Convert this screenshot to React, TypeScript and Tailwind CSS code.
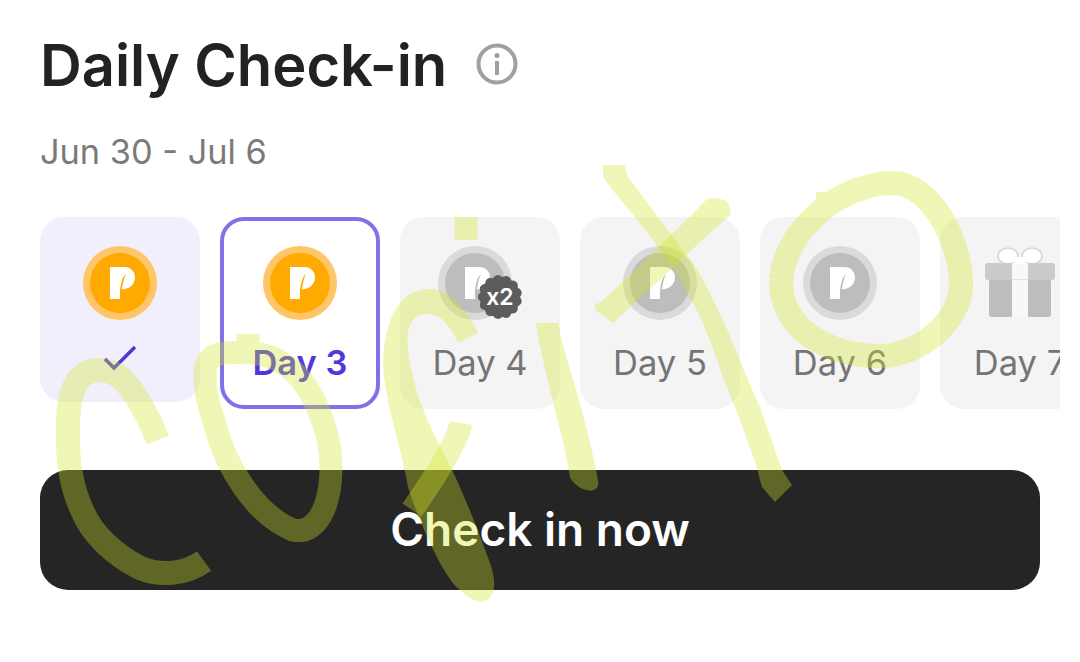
const FONT = "font-['Inter','Liberation_Sans',sans-serif]";

function Coin({ muted = false, className = "" }: { muted?: boolean; className?: string }) {
	return (
		<svg width="74" height="74" viewBox="0 0 74 74" className={`block shrink-0 ${className}`}>
			<circle cx="37" cy="37" r="37" fill={muted ? "#dadada" : "#ffc566"} />
			<circle cx="37" cy="37" r="30" fill={muted ? "#bdbdbd" : "#ffaa00"} />
			<path
				d="M27 21H41C48 21 52 26 52 31C52 38 47 43 39 43.5C39.5 38 41 32 43 28C39 31 36.5 40 37 53H27Z"
				fill="#fff"
			/>
		</svg>
	);
}

function scallopPath(cx: number, cy: number, r: number, bumps: number) {
	let d = "";
	for (let i = 0; i < bumps; i++) {
		const a0 = (i / bumps) * Math.PI * 2;
		const a1 = ((i + 0.5) / bumps) * Math.PI * 2;
		const a2 = ((i + 1) / bumps) * Math.PI * 2;
		if (i === 0) d += `M${cx + (r - 2) * Math.cos(a0)} ${cy + (r - 2) * Math.sin(a0)}`;
		d += `Q${cx + (r + 3) * Math.cos(a1)} ${cy + (r + 3) * Math.sin(a1)} ${cx + (r - 2) * Math.cos(a2)} ${cy + (r - 2) * Math.sin(a2)}`;
	}
	return `${d}Z`;
}

function Gift() {
	return (
		<svg width="74" height="74" viewBox="0 0 74 74" className="block shrink-0">
			<ellipse cx="25" cy="10" rx="10" ry="8" fill="#fff" stroke="#d4d4d4" strokeWidth="1.5" />
			<ellipse cx="49" cy="10" rx="10" ry="8" fill="#fff" stroke="#d4d4d4" strokeWidth="1.5" />
			<rect x="6" y="33" width="62" height="38" rx="3" fill="#bdbdbd" />
			<rect x="2" y="17" width="70" height="17" rx="3" fill="#cbcbcb" />
			<rect x="29" y="17" width="16" height="54" fill="#f8f8f8" />
			<rect x="29" y="33" width="16" height="1" fill="#e4e4e4" />
			<rect x="31" y="11" width="12" height="7" rx="3" fill="#fff" />
		</svg>
	);
}

function DayCard({ label, x2, gift }: { label: string; x2?: boolean; gift?: boolean }) {
	return (
		<div className="relative flex h-[192px] w-[160px] shrink-0 flex-col items-center rounded-[24px] bg-[#f4f4f5] pt-[29px]">
			{gift ? <Gift /> : <Coin muted className={x2 ? "mr-[10px]" : ""} />}
			{x2 && (
				<div className="absolute left-[77px] top-[57px] h-[46px] w-[46px]">
					<svg width="46" height="46" viewBox="0 0 46 46" className="block">
						<path d={scallopPath(23, 23, 22, 13)} fill="#5c5c5c" />
					</svg>
					<span className="absolute inset-0 flex items-center justify-center text-[23px] font-semibold leading-none text-white">
						x2
					</span>
				</div>
			)}
			<span className="mt-[23px] text-[34.5px] leading-[40px] text-[#757575]">{label}</span>
		</div>
	);
}

export default function App() {
	return (
		<div className={`relative h-[662px] w-[1080px] overflow-hidden bg-white ${FONT}`}>
			<div className="flex flex-col pl-[40px] pt-[29px]">
				<div className="flex items-center gap-[29px]">
					<h1 className="text-[57.8px] font-semibold leading-[72px] text-[#222222]">Daily Check-in</h1>
					<svg width="42" height="42" viewBox="0 0 42 42" className="mb-[2px]">
						<circle cx="21" cy="21" r="18.5" fill="none" stroke="#a0a0a0" strokeWidth="4" />
						<circle cx="21" cy="12.5" r="2.5" fill="#a0a0a0" />
						<rect x="19" y="18" width="4" height="14" fill="#a0a0a0" />
					</svg>
				</div>
				<p className="mt-[29px] text-[34.3px] leading-[44px] text-[#7a7a7a]">Jun 30 - Jul 6</p>
				<div className="mt-[43px] flex w-[1020px] items-start gap-[20px] overflow-hidden">
					<div className="flex h-[185px] w-[160px] shrink-0 flex-col items-center rounded-[24px] bg-[#f2effd] pt-[29px]">
						<Coin />
						<svg width="36" height="28" viewBox="0 0 36 28" className="mt-[24px]">
							<path d="M3 15L12 24L33 3" fill="none" stroke="#5138d0" strokeWidth="3.5" />
						</svg>
					</div>
					<div className="flex h-[192px] w-[160px] shrink-0 flex-col items-center rounded-[24px] border-[4px] border-[#8071e8] bg-white pt-[25px]">
						<Coin />
						<span className="mt-[23px] text-[34.5px] font-semibold leading-[40px] text-[#5138dc]">Day 3</span>
					</div>
					<DayCard label="Day 4" x2 />
					<DayCard label="Day 5" />
					<DayCard label="Day 6" />
					<DayCard label="Day 7" gift />
				</div>
				<button
					type="button"
					className="mt-[61px] flex h-[120px] w-[1000px] items-center justify-center rounded-[28px] bg-[#252525] pb-[2px] text-[46px] font-semibold text-white"
				>
					Check in now
				</button>
			</div>
			{/* hand-drawn scribble lying over the page */}
			<svg
				width="1080"
				height="662"
				viewBox="0 0 1080 662"
				fill="none"
				stroke="#d3e526"
				strokeOpacity="0.34"
				className="pointer-events-none absolute left-0 top-0"
			>
				<path strokeWidth="24" d="M158 440C150 420 135 390 120 377C110 370 100 369 92 371C72 376 67 400 68 440C68 470 75 495 82 510C92 535 115 555 140 568C160 576 185 575 204 561" />
				<path strokeWidth="23" d="M248 334V342M253 353C225 352 205 350 205 375C205 390 207 400 215 425C225 465 255 515 293 530C315 535 330 510 331 470C332 430 310 380 285 365C275 358 265 354 253 353" />
				<path strokeWidth="23" d="M466 217V240" />
				<g stroke="none" fill="#d3e526" fillOpacity="0.34">
					<path d="M478 333C470 315 452 289 430 289C405 289 385 310 383 363C384 400 402 450 408 487C420 525 445 580 460 590C470 600 480 604 487 600C496 595 496 580 490 563C480 535 462 490 452 470C440 445 420 410 413 377C408 355 405 335 410 325C415 313 430 310 443 320C450 327 455 335 458 343Z" />
					<path d="M536 323H558C565 360 585 410 598 480C600 490 592 492 587 490C582 490 575 485 570 478C565 440 545 380 536 323Z" />
					<path d="M603 165H625L627 175C645 200 675 240 693 263C710 290 715 305 723 320C740 360 750 385 760 407C768 430 775 450 782 470L792 485L775 502L762 487C760 480 758 473 757 467C745 435 735 405 723 377C712 345 705 325 693 303C680 280 670 262 653 240C635 215 615 195 603 177Z" />
					<path d="M707 199C712 197 722 198 727 202C732 208 732 214 727 218C690 250 650 290 613 323L595 310L595 304L600 303C635 270 675 232 707 199Z" />
				</g>
				<path strokeWidth="23" d="M461 423C458 440 440 470 412 510" />
				<path strokeWidth="24" d="M828 192V210M781 280C785 230 840 183 893 183C930 183 961 240 961 285C961 320 920 356 880 356C830 356 780 330 781 280" />
			</svg>
		</div>
	);
}
